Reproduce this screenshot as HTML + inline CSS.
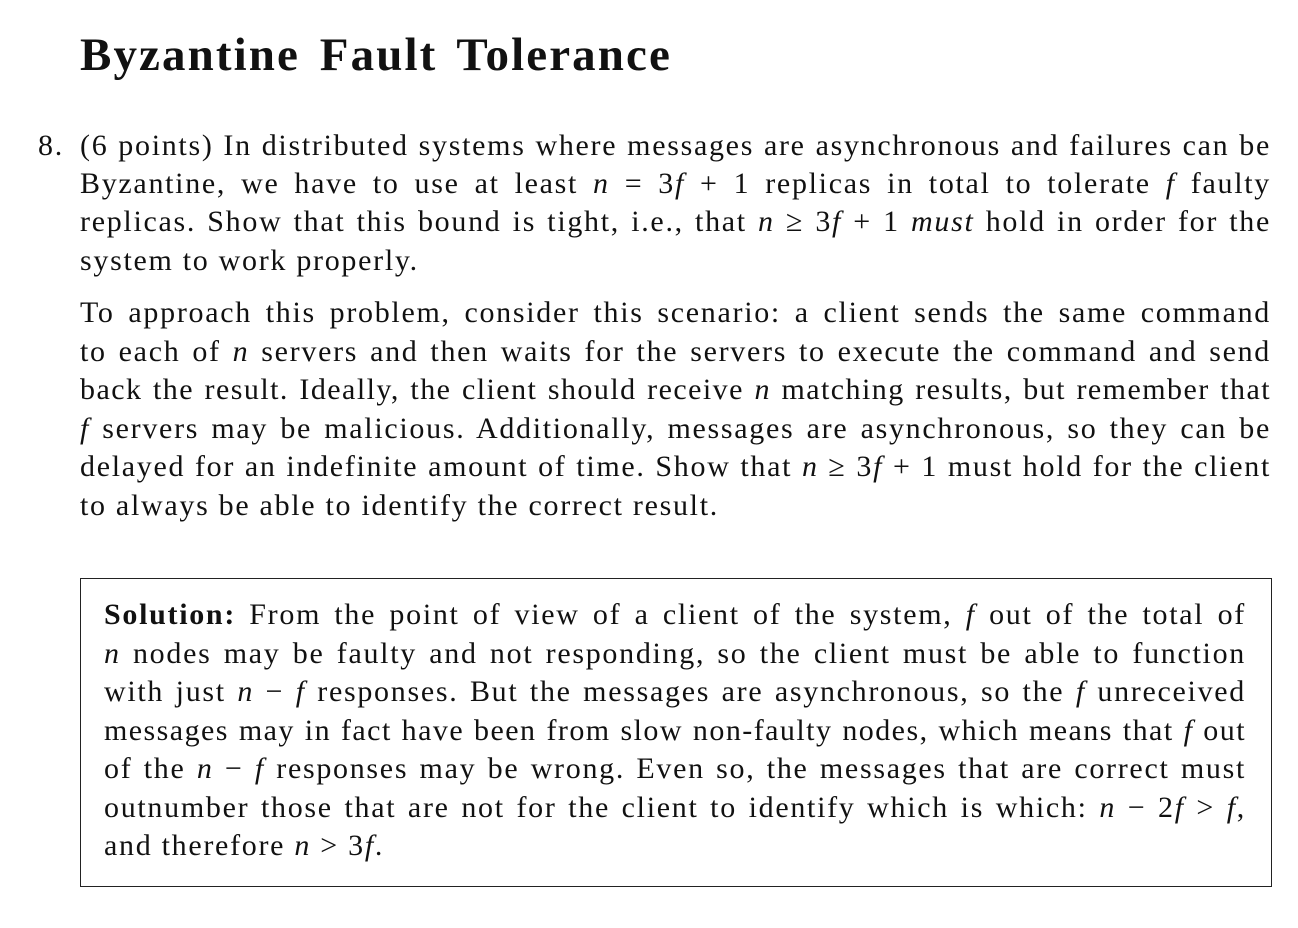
<!DOCTYPE html>
<html><head><meta charset="utf-8"><style>
body{margin:0;background:#fff;width:1298px;height:928px;position:relative;overflow:hidden;font-family:"Liberation Serif",serif;color:#111;}
.t{position:absolute;left:80px;top:28px;font-size:47px;font-weight:bold;letter-spacing:2.1px;word-spacing:6px;}
.l{position:absolute;left:80px;width:1191px;font-size:30px;letter-spacing:1.7px;line-height:38px;height:38px;text-align:justify;text-align-last:justify;white-space:nowrap;}
.l.s{left:104px;width:1142px;}
.l.tight{letter-spacing:1.45px;}
.n{text-align-last:left;}
i{font-style:italic;}
.box{position:absolute;left:80px;top:578px;width:1190px;height:307px;border:1px solid #222;}
</style></head><body>
<div class="t">Byzantine Fault Tolerance</div>
<div class="l n" style="left:38px;top:127px;width:40px">8.</div>
<div class="l" style="top:127px">(6 points) In distributed systems where messages are asynchronous and failures can be</div>
<div class="l" style="top:165px">Byzantine, we have to use at least <i>n</i> = 3<i>f</i> + 1 replicas in total to tolerate <i>f</i> faulty</div>
<div class="l" style="top:203px">replicas. Show that this bound is tight, i.e., that <i>n</i> ≥ 3<i>f</i> + 1 <i>must</i> hold in order for the</div>
<div class="l n" style="top:242px">system to work properly.</div>
<div class="l" style="top:294px">To approach this problem, consider this scenario: a client sends the same command</div>
<div class="l" style="top:333px">to each of <i>n</i> servers and then waits for the servers to execute the command and send</div>
<div class="l tight" style="top:371px">back the result. Ideally, the client should receive <i>n</i> matching results, but remember that</div>
<div class="l" style="top:410px"><i>f</i> servers may be malicious. Additionally, messages are asynchronous, so they can be</div>
<div class="l" style="top:448px">delayed for an indefinite amount of time. Show that <i>n</i> ≥ 3<i>f</i> + 1 must hold for the client</div>
<div class="l n" style="top:487px">to always be able to identify the correct result.</div>
<div class="box"></div>
<div class="l s" style="top:596px"><b>Solution:</b> From the point of view of a client of the system, <i>f</i> out of the total of</div>
<div class="l s" style="top:635px"><i>n</i> nodes may be faulty and not responding, so the client must be able to function</div>
<div class="l s" style="top:673px">with just <i>n</i> − <i>f</i> responses. But the messages are asynchronous, so the <i>f</i> unreceived</div>
<div class="l s tight" style="top:712px">messages may in fact have been from slow non-faulty nodes, which means that <i>f</i> out</div>
<div class="l s" style="top:750px">of the <i>n</i> − <i>f</i> responses may be wrong. Even so, the messages that are correct must</div>
<div class="l s" style="top:789px">outnumber those that are not for the client to identify which is which: <i>n</i> − 2<i>f</i> &gt; <i>f</i>,</div>
<div class="l s n" style="top:827px">and therefore <i>n</i> &gt; 3<i>f</i>.</div>
</body></html>
